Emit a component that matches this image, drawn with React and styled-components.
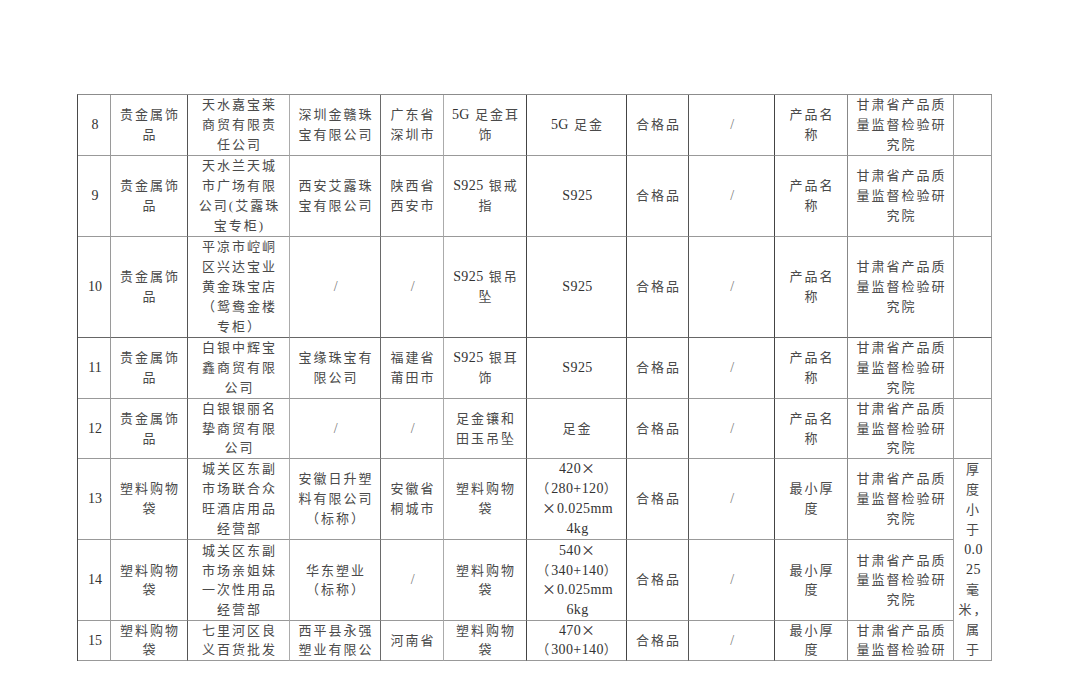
import React from "react";
import styled, { createGlobalStyle } from "styled-components";

const GlobalStyle = createGlobalStyle`
  html, body { margin: 0; padding: 0; background: #ffffff; }
`;

const Page = styled.div`
  box-sizing: border-box;
  width: 1080px;
  min-height: 682px;
  padding: 94px 0 0 77px;
  background: #ffffff;
`;

const Table = styled.table`
  border-collapse: separate;
  border-spacing: 0;
  table-layout: fixed;
  width: 915px;
  border-top: 1px solid #8c8c8c;
  border-left: 1px solid #4a4a4a;
  font-family: "Liberation Serif", "Noto Sans CJK SC", serif;
  color: #4a4a4a;
`;

const Row = styled.tr`
  height: ${(p) => p.$h}px;
`;

const Cell = styled.td`
  box-sizing: border-box;
  padding: ${(p) => (p.$top ? "1px" : "0")} 0 0 2px;
  text-align: center;
  vertical-align: ${(p) => (p.$top ? "top" : "middle")};
  white-space: nowrap;
  font-size: 13px;
  line-height: ${(p) => p.$lh}px;
  letter-spacing: 2px;
  border-right: 1px solid ${(p) => p.$vc};
  border-bottom: 1px solid ${(p) => p.$hc};
`;

const Latin = styled.span`
  font-family: "Liberation Serif", serif;
  font-size: 14px;
  line-height: 14px;
  letter-spacing: ${(p) => (p.$num ? "0" : "0.4px")};
  color: ${(p) => (p.$slash ? "#777" : "#333")};
`;

const Wide = styled.span`
  font-family: "Noto Sans CJK SC", sans-serif;
  font-size: 14px;
  line-height: 14px;
  letter-spacing: 1px;
  color: #333;
`;

const widths = [33, 77, 102, 91, 63, 83, 100, 62, 86, 73, 106, 38];
const vColors = [
  "#9a9a9a", "#555", "#ababab", "#6a6a6a", "#ababab", "#444",
  "#444", "#555", "#444", "#888", "#9a9a9a", "#9a9a9a",
];

const INST = ["甘肃省产品质", "量监督检验研", "究院"];

const rows = [
  {
    h: 61, hc: "#999", lh: 20,
    cells: [["8"], ["贵金属饰", "品"], ["天水嘉宝莱", "商贸有限责", "任公司"], ["深圳金赣珠", "宝有限公司"], ["广东省", "深圳市"], ["5G 足金耳", "饰"], ["5G 足金"], ["合格品"], ["/"], ["产品名", "称"], INST, []],
  },
  {
    h: 80, hc: "#999", lh: 20,
    cells: [["9"], ["贵金属饰", "品"], ["天水兰天城", "市广场有限", "公司(艾露珠", "宝专柜)"], ["西安艾露珠", "宝有限公司"], ["陕西省", "西安市"], ["S925 银戒", "指"], ["S925"], ["合格品"], ["/"], ["产品名", "称"], INST, []],
  },
  {
    h: 101, hc: "#666", lh: 20,
    cells: [["10"], ["贵金属饰", "品"], ["平凉市崆峒", "区兴达宝业", "黄金珠宝店", "（鸳鸯金楼", "专柜）"], ["/"], ["/"], ["S925 银吊", "坠"], ["S925"], ["合格品"], ["/"], ["产品名", "称"], INST, []],
  },
  {
    h: 61, hc: "#999", lh: 20,
    cells: [["11"], ["贵金属饰", "品"], ["白银中辉宝", "鑫商贸有限", "公司"], ["宝缘珠宝有", "限公司"], ["福建省", "莆田市"], ["S925 银耳", "饰"], ["S925"], ["合格品"], ["/"], ["产品名", "称"], INST, []],
  },
  {
    h: 60, hc: "#999", lh: 19.5,
    cells: [["12"], ["贵金属饰", "品"], ["白银银丽名", "挚商贸有限", "公司"], ["/"], ["/"], ["足金镶和", "田玉吊坠"], ["足金"], ["合格品"], ["/"], ["产品名", "称"], INST, []],
  },
  {
    h: 81, hc: "#999", lh: 20,
    cells: [["13"], ["塑料购物", "袋"], ["城关区东副", "市场联合众", "旺酒店用品", "经营部"], ["安徽日升塑", "料有限公司", "（标称）"], ["安徽省", "桐城市"], ["塑料购物", "袋"], ["420×", "（280+120）", "×0.025mm", "4kg"], ["合格品"], ["/"], ["最小厚", "度"], INST,
      { span: 3, lines: ["厚", "度", "小", "于", "0.0", "25", "毫", "米，", "属", "于"] }],
  },
  {
    h: 80, hc: "#999", lh: 19.5,
    cells: [["14"], ["塑料购物", "袋"], ["城关区东副", "市场亲姐妹", "一次性用品", "经营部"], ["华东塑业", "（标称）"], ["/"], ["塑料购物", "袋"], ["540×", "（340+140）", "×0.025mm", "6kg"], ["合格品"], ["/"], ["最小厚", "度"], INST],
  },
  {
    h: 40, hc: "#999", lh: 19.5,
    cells: [["15"], ["塑料购物", "袋"], ["七里河区良", "义百货批发"], ["西平县永强", "塑业有限公"], ["河南省"], ["塑料购物", "袋"], ["470×", "（300+140）"], ["合格品"], ["/"], ["最小厚", "度"], ["甘肃省产品质", "量监督检验研"]],
  },
];

function renderLine(line, isNum) {
  const parts = line.split(/([A-Za-z0-9.+/]+|×)/).filter((s) => s !== "");
  return parts.map((part, i) => {
    if (part === "×") return <Wide key={i}>×</Wide>;
    if (/^[A-Za-z0-9.+/]+$/.test(part)) {
      return (
        <Latin key={i} $num={isNum} $slash={part === "/"}>
          {part}
        </Latin>
      );
    }
    return <React.Fragment key={i}>{part}</React.Fragment>;
  });
}

function CellContent({ lines, isNum }) {
  return lines.map((line, i) => (
    <React.Fragment key={i}>
      {i > 0 && <br />}
      {renderLine(line, isNum)}
    </React.Fragment>
  ));
}

export default function App() {
  return (
    <Page>
      <GlobalStyle />
      <Table>
        <colgroup>
          {widths.map((w, i) => (
            <col key={i} style={{ width: w }} />
          ))}
        </colgroup>
        <tbody>
          {rows.map((row, r) => (
            <Row key={r} $h={row.h}>
              {row.cells.map((cell, c) => {
                if (Array.isArray(cell)) {
                  return (
                    <Cell key={c} $lh={row.lh} $vc={vColors[c]} $hc={row.hc}>
                      <CellContent lines={cell} isNum={c === 0} />
                    </Cell>
                  );
                }
                return (
                  <Cell key={c} rowSpan={cell.span} $top $lh={20} $vc={vColors[c]} $hc="#999">
                    <CellContent lines={cell.lines} isNum={false} />
                  </Cell>
                );
              })}
            </Row>
          ))}
        </tbody>
      </Table>
    </Page>
  );
}
